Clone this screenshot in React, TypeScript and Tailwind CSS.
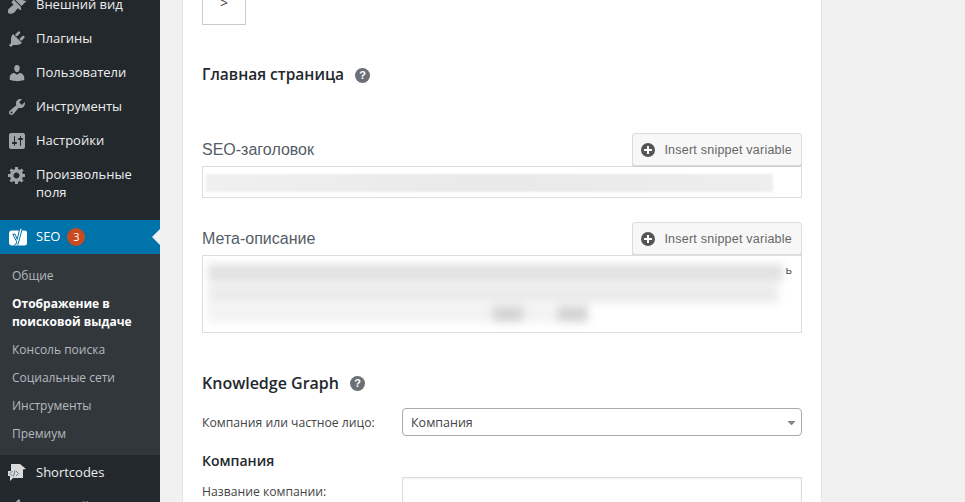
import type { ReactNode } from 'react';
import { FaCaretDown } from 'react-icons/fa';

const font = "font-['Open_Sans',sans-serif]";

const icons: Record<string, string> = {
  brush:
    'M14.48 11.06L7.41 3.99l1.5-1.5c.5-.56 2.3-.47 3.51.32 1.21.8 1.43 1.28 2.91 2.1 1.18.64 2.45 1.26 4.45.85zm-.71.71L6.7 4.7 4.93 6.47c-.39.39-.39 1.02 0 1.41l1.06 1.06c.39.39.39 1.03 0 1.42-.6.6-1.43 1.11-2.21 1.69-.35.26-.7.53-1.01.84C1.43 13.23 0 16.6 1.53 18.13c1.53 1.53 4.9.1 6.24-1.24.31-.31.58-.66.84-1.01.58-.78 1.09-1.61 1.69-2.21.39-.39 1.03-.39 1.42 0l1.06 1.06c.39.39 1.02.39 1.41 0z',
  plugin:
    'M13.11 4.36L9.87 7.6 8 5.73l3.24-3.24c.35-.34 1.05-.2 1.56.32.52.51.66 1.21.31 1.55zm-8 1.77l.91-1.12 9.01 9.01-1.19.84c-.71.71-2.63 1.16-3.82 1.16H6.14L4.9 17.26c-.59.59-1.54.59-2.12 0-.59-.58-.59-1.53 0-2.12l1.24-1.24v-3.88c0-1.13.4-3.19 1.09-3.89zm7.26 3.97l3.24-3.24c.34-.35 1.04-.21 1.55.31.52.51.66 1.21.31 1.55l-3.24 3.25z',
  user:
    'M10 9.25c-2.27 0-2.73-3.44-2.73-3.44C7 4.02 7.82 2 9.97 2c2.16 0 2.98 2.02 2.71 3.81 0 0-.41 3.44-2.68 3.44zm0 2.57L12.72 10c2.39 0 4.52 2.33 4.52 4.53v2.49s-3.65 1.13-7.24 1.13c-3.65 0-7.24-1.13-7.24-1.13v-2.49c0-2.25 1.94-4.48 4.47-4.48z',
  tools:
    'M16.68 9.77c-1.34 1.34-3.3 1.67-4.95.99l-5.41 6.52c-.99.99-2.59.99-3.58 0s-.99-2.59 0-3.57l6.52-5.42c-.68-1.65-.35-3.61.99-4.95 1.28-1.28 3.12-1.62 4.72-1.06l-2.89 2.89 2.82 2.82 2.86-2.87c.53 1.58.18 3.39-1.08 4.65zM3.81 16.21c.4.39 1.04.39 1.43 0 .4-.4.4-1.04 0-1.43-.39-.4-1.03-.4-1.43 0-.39.39-.39 1.03 0 1.43z',
  settings:
    'M18 16V4c0-1.1-.9-2-2-2H4c-1.1 0-2 .9-2 2v12c0 1.1.9 2 2 2h12c1.1 0 2-.9 2-2zM8 11h1c.55 0 1 .45 1 1s-.45 1-1 1H8v1.5c0 .28-.22.5-.5.5s-.5-.22-.5-.5V13H6c-.55 0-1-.45-1-1s.45-1 1-1h1V5.5c0-.28.22-.5.5-.5s.5.22.5.5V11zm5-2h-1c-.55 0-1-.45-1-1s.45-1 1-1h1V5.5c0-.28.22-.5.5-.5s.5.22.5.5V7h1c.55 0 1 .45 1 1s-.45 1-1 1h-1v5.5c0 .28-.22.5-.5.5s-.5-.22-.5-.5V9z',
  gear:
    'M18 12h-2.18c-.17.7-.44 1.35-.81 1.93l1.54 1.54-2.1 2.1-1.54-1.54c-.58.36-1.23.63-1.91.79V19H8v-2.18c-.68-.16-1.33-.43-1.91-.79l-1.54 1.54-2.12-2.12 1.54-1.54c-.36-.58-.63-1.23-.79-1.91H1V9.03h2.17c.16-.7.44-1.35.8-1.94L2.43 5.55l2.1-2.1 1.54 1.54c.58-.37 1.24-.64 1.93-.81V2h3v2.18c.68.16 1.33.43 1.91.79l1.54-1.54 2.12 2.12-1.54 1.54c.36.59.64 1.24.8 1.94H18V12zm-8.5 1.5c1.66 0 3-1.34 3-3s-1.34-3-3-3-3 1.34-3 3 1.34 3 3 3z',
};

const menu = [
  { icon: 'brush', label: 'Внешний вид' },
  { icon: 'plugin', label: 'Плагины' },
  { icon: 'user', label: 'Пользователи' },
  { icon: 'tools', label: 'Инструменты' },
  { icon: 'settings', label: 'Настройки' },
];

const submenu = ['Консоль поиска', 'Социальные сети', 'Инструменты', 'Премиум'];

function DashIcon({ name }: { name: string }) {
  return (
    <svg viewBox="0 0 20 20" className="w-5 h-5 fill-[#a0a5aa] shrink-0">
      <path d={icons[name]} />
    </svg>
  );
}

function YoastIcon() {
  return (
    <svg viewBox="0 0 20 20" className="w-5 h-5 shrink-0">
      <path d="M4 3.5h13a2 2 0 0 1 2 2V16a2.5 2.5 0 0 1-2.5 2.5H4A3 3 0 0 1 1 15.5v-9a3 3 0 0 1 3-3z" fill="#fff" />
      <path d="M4.8 7.2h2.4l2 5.2 2.6-11h2.5L10.4 16c-.5 1.9-1.5 3-3.2 3.5l-.5-1.7c1-.3 1.5-.9 1.7-1.8l.3-1.3z" fill="#fff" stroke="#0073aa" strokeWidth="1" />
    </svg>
  );
}

function ShortcodesIcon() {
  return (
    <svg viewBox="0 0 20 20" className="w-5 h-5 shrink-0">
      <path d="M4 1h9l6 5-3 .5V15H6l-3 3v-5H1V8h3z" fill="#d9dadb" />
      <path d="M5.5 8L3 10.5 5.5 13M9 8l2.5 2.5L9 13M8 7.5l-1.5 6" fill="none" stroke="#6d7177" strokeWidth="0.9" />
    </svg>
  );
}

function HelpIcon() {
  return (
    <span className="w-[15px] h-[15px] rounded-full bg-[#6b7076] text-white text-[11px] font-bold leading-[15px] text-center shrink-0 font-['Liberation_Sans',sans-serif]">
      ?
    </span>
  );
}

function PlusIcon() {
  return (
    <span className="relative w-[14px] h-[14px] rounded-full bg-[#555] shrink-0 flex items-center justify-center">
      <span className="w-2 h-0.5 bg-white" />
      <span className="absolute w-0.5 h-2 bg-white" />
    </span>
  );
}

function MenuItem({ icon, children }: { icon: ReactNode; children: ReactNode }) {
  return (
    <div className="flex items-start h-[34px] pt-2 pl-[7px] gap-[9px] text-[13px] leading-[18px] text-[#eeeeee]">
      {icon}
      <span>{children}</span>
    </div>
  );
}

function Sidebar() {
  return (
    <aside className={`w-40 shrink-0 h-full bg-[#23282d] overflow-hidden ${font}`}>
      <div className="-mt-[13px]">
        {menu.map((item) => (
          <MenuItem key={item.label} icon={<DashIcon name={item.icon} />}>
            {item.label}
          </MenuItem>
        ))}
        <div className="flex items-start pt-2 pb-[19px] pl-[7px] gap-[9px] text-[13px] leading-[18px] text-[#eeeeee]">
          <DashIcon name="gear" />
          <span>
            Произвольные
            <br />
            поля
          </span>
        </div>
      </div>
      <div className="relative flex items-center h-[34px] pl-[8px] gap-[8px] bg-[#0073aa] text-[13px] text-white">
        <YoastIcon />
        <span>SEO</span>
        <span className="-ml-[1px] w-[18px] h-[18px] rounded-full bg-[#ca4a1f] text-[11px] leading-[18px] text-center">3</span>
        <span className="absolute right-0 top-[9px] border-y-8 border-r-8 border-y-transparent border-r-[#f1f1f1]" />
      </div>
      <div className="bg-[#32373c] pt-[11px] pb-[4px] pl-3 text-[12px] leading-[18px] text-[#b4b9be]">
        <div className="h-7 pt-[2px]">Общие</div>
        <div className="pt-[2px] pb-2 font-bold text-white">
          Отображение в
          <br />
          поисковой выдаче
        </div>
        {submenu.map((label) => (
          <div key={label} className="h-7 pt-[2px]">
            {label}
          </div>
        ))}
      </div>
      <div>
        <MenuItem icon={<ShortcodesIcon />}>Shortcodes</MenuItem>
        <MenuItem icon={<DashIcon name="plugin" />}>Настройки</MenuItem>
      </div>
    </aside>
  );
}

function FieldHeader({ label }: { label: string }) {
  return (
    <div className="flex items-end justify-between">
      <span className="text-[16px] leading-[22px] pb-[5px] text-[#555d66] font-['Liberation_Sans',sans-serif]">{label}</span>
      <span className="flex items-center gap-[9px] h-[33px] pl-[8px] pr-[9px] bg-[#f7f7f7] border border-[#dddddd] rounded-[3px] shadow-[0_1px_0_#ccc] text-[12.5px] tracking-[0.23px] text-[#666] font-['Liberation_Sans',sans-serif]">
        <PlusIcon />
        <span className="pt-[1px]">Insert snippet variable</span>
      </span>
    </div>
  );
}

function Form() {
  return (
    <main className={`ml-[22px] w-[640px] h-full bg-white border-x border-[#e5e5e5] shadow-[0_1px_1px_rgba(0,0,0,0.04)] overflow-hidden px-[19px] ${font} text-[#32373c]`}>
      <div className="w-11 h-[25px] border border-t-0 border-[#cccccc] text-center text-[14px] leading-[5px] text-[#444]">&gt;</div>

      <div className="flex items-center gap-[11px] mt-[40px] h-[20px]">
        <h2 className="text-[15.5px] font-semibold text-[#23282d]">Главная страница</h2>
        <HelpIcon />
      </div>

      <div className="mt-[48px]">
        <FieldHeader label="SEO-заголовок" />
        <div className="h-[32px] border border-[#dddddd] pt-[7px] pl-[3px] overflow-hidden">
          <div className="w-[567px] h-[18px] bg-gradient-to-r from-[#f0f0f0] via-[#e9e9e9] to-[#eeeeee] blur-[1px]" />
        </div>
      </div>

      <div className="mt-[24px]">
        <FieldHeader label="Мета-описание" />
        <div className="relative h-[78px] border border-[#dddddd] pt-2 pl-[5px] overflow-hidden">
          <div className="w-[575px] flex flex-col gap-[3px] blur-[4px]">
            <div className="h-[18px] bg-[#e2e2e2]" />
            <div className="h-[18px] w-[570px] bg-[#ebebeb]" />
            <div className="flex justify-between h-[16px] w-[380px] bg-[#f2f2f2]">
              <span className="ml-[285px] w-[30px] bg-[#d4d4d4]" />
              <span className="w-[30px] bg-[#d4d4d4]" />
            </div>
          </div>
          <span className="absolute right-[9px] top-[5px] text-[11px] leading-[18px] text-[#444]">ь</span>
        </div>
      </div>

      <div className="flex items-center gap-[11px] mt-[38px] h-[24px]">
        <h2 className="text-[16px] font-semibold text-[#23282d]">Knowledge Graph</h2>
        <HelpIcon />
      </div>

      <div className="flex items-center mt-[13px]">
        <span className="w-[200px] pt-[2px] text-[12.2px] text-[#444]">Компания или частное лицо:</span>
        <div className="flex-1 flex items-center justify-between h-[28px] pl-2 pr-[3px] border border-[#aaaaaa] rounded-[4px] text-[12.5px] text-[#444]">
          <span className="pt-[3px]">Компания</span>
          <FaCaretDown className="text-[13px] text-[#888]" />
        </div>
      </div>

      <h3 className="mt-[15px] text-[14px] leading-[20px] font-semibold text-[#23282d]">Компания</h3>

      <div className="flex items-start mt-[6px]">
        <span className="w-[200px] pt-[6px] text-[12.2px] text-[#444]">Название компании:</span>
        <div className="flex-1 h-[40px] border border-[#dddddd] shadow-[inset_0_1px_2px_rgba(0,0,0,0.07)]" />
      </div>
    </main>
  );
}

export default function App() {
  return (
    <div className="flex w-[965px] h-[502px] overflow-hidden bg-[#f1f1f1]">
      <Sidebar />
      <Form />
    </div>
  );
}
